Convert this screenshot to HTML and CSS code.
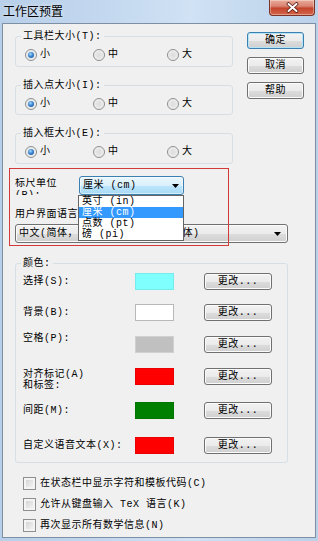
FILE: index.html
```html
<!DOCTYPE html>
<html>
<head>
<meta charset="utf-8">
<link rel="stylesheet" href="styles.css">
</head>
<body>
<div class="window">
  <div class="titlebar">
    <div class="title">工作区预置</div>
    <div class="close">
      <svg width="13" height="11" viewBox="0 0 13 11">
        <path d="M2.5 2 L10.5 9 M10.5 2 L2.5 9" stroke="#5a1c12" stroke-width="3.6" stroke-linecap="round"/>
        <path d="M2.5 2 L10.5 9 M10.5 2 L2.5 9" stroke="#ffffff" stroke-width="2" stroke-linecap="round"/>
      </svg>
    </div>
  </div>
  <div class="client">
    <div class="top">
      <div class="groups">
        <div class="group g1">
          <div class="legend">工具栏大小(T):</div>
          <div class="radios">
            <span class="opt"><i class="radio on"></i>小</span>
            <span class="opt"><i class="radio"></i>中</span>
            <span class="opt"><i class="radio"></i>大</span>
          </div>
        </div>
        <div class="group g2">
          <div class="legend">插入点大小(I):</div>
          <div class="radios">
            <span class="opt"><i class="radio on"></i>小</span>
            <span class="opt"><i class="radio"></i>中</span>
            <span class="opt"><i class="radio"></i>大</span>
          </div>
        </div>
        <div class="group g3">
          <div class="legend">插入框大小(E):</div>
          <div class="radios">
            <span class="opt"><i class="radio on"></i>小</span>
            <span class="opt"><i class="radio"></i>中</span>
            <span class="opt"><i class="radio"></i>大</span>
          </div>
        </div>
      </div>
      <div class="buttons">
        <div class="btn default">确定</div>
        <div class="btn">取消</div>
        <div class="btn">帮助</div>
      </div>
    </div>

    <div class="ruler-row">
      <div class="ruler-label">标尺单位<br>(R):</div>
      <div class="combo-wrap">
        <div class="combo hot"><span>厘米 (cm)</span><svg class="arrow" width="7" height="4" viewBox="0 0 7 4"><polygon points="0,0 7,0 3.5,4" fill="#000"/></svg></div>
        <div class="dropdown">
          <div class="item">英寸 (in)</div>
          <div class="item sel">厘米 (cm)</div>
          <div class="item">点数 (pt)</div>
          <div class="item">磅 (pi)</div>
        </div>
      </div>
    </div>

    <div class="lang-label">用户界面语言(L):</div>
    <div class="combo wide"><span>中文(简体，中国) - 中文 (CN简体)</span><svg class="arrow" width="7" height="4" viewBox="0 0 7 4"><polygon points="0,0 7,0 3.5,4" fill="#000"/></svg></div>

    <div class="group colors">
      <div class="legend">颜色:</div>
      <div class="color-grid">
        <div class="clabel">选择(S):</div><div class="swatch sw-cyan"></div><div class="btn change">更改...</div>
        <div class="clabel">背景(B):</div><div class="swatch sw-white"></div><div class="btn change">更改...</div>
        <div class="clabel up">空格(P):</div><div class="swatch sw-grey"></div><div class="btn change">更改...</div>
        <div class="clabel two">对齐标记(A)<br>和标签:</div><div class="swatch sw-red"></div><div class="btn change">更改...</div>
        <div class="clabel">间距(M):</div><div class="swatch sw-green"></div><div class="btn change">更改...</div>
        <div class="clabel">自定义语音文本(X):</div><div class="swatch sw-red"></div><div class="btn change">更改...</div>
      </div>
    </div>

    <div class="checks">
      <div class="check"><i class="box"></i>在状态栏中显示字符和模板代码(C)</div>
      <div class="check"><i class="box"></i>允许从键盘输入 TeX 语言(K)</div>
      <div class="check"><i class="box"></i>再次显示所有数学信息(N)</div>
    </div>

    <div class="annot"></div>
  </div>
</div>
</body>
</html>
```

FILE: styles.css
```css
* { box-sizing: border-box; }
html, body { margin: 0; padding: 0; }
body {
  width: 318px;
  height: 541px;
  overflow: hidden;
  font-family: "Liberation Mono", "Noto Sans CJK SC", monospace;
  font-size: 10px;
  letter-spacing: 0.5px;
  line-height: 12px;
  color: #000;
}
.window {
  width: 318px;
  height: 541px;
  background: linear-gradient(to right, #b7cfe9 0%, #c6daf0 40%, #d0e2f4 60%, #bad1ea 100%);
  display: flex;
  flex-direction: column;
}
.titlebar {
  height: 23px;
  flex: none;
  display: flex;
  justify-content: space-between;
  align-items: flex-start;
}
.title {
  font-family: "Noto Sans CJK SC", sans-serif;
  font-size: 12px;
  letter-spacing: 0;
  line-height: 14px;
  margin: 4px 0 0 3px;
  text-shadow: 0 0 4px rgba(255,255,255,0.8);
}
.close {
  width: 46px;
  height: 16px;
  margin-right: 3px;
  border: 1px solid #7d3225;
  border-top: none;
  border-radius: 0 0 4px 4px;
  background: linear-gradient(#eaa998 0%, #d98673 40%, #c4442c 55%, #d3654b 100%);
  box-shadow: inset 0 0 0 1px rgba(255,255,255,0.35);
  display: flex;
  align-items: center;
  justify-content: center;
}
.client {
  flex: none;
  height: 515px;
  margin: 0 2px;
  border: 1px solid #7e8ea3;
  background: #f0f0f0;
  padding: 8px 0 0 12px;
  position: relative;
}
.top { display: flex; align-items: flex-start; }
.groups {
  width: 218px;
  padding-top: 4px;
  display: flex;
  flex-direction: column;
  gap: 18px;
}
.group {
  border: 1px solid #d5dfe5;
  border-radius: 3px;
}
.g1 { height: 31px; }
.g2 { height: 30px; }
.g3 { height: 31px; }
.legend {
  width: fit-content;
  margin: -6px 0 0 5px;
  padding: 0 2px;
  background: #f0f0f0;
  white-space: nowrap;
}
.radios {
  display: grid;
  grid-template-columns: 68px 74px auto;
  padding-left: 9px;
  margin-top: 6px;
  height: 12px;
}
.opt { display: flex; align-items: center; gap: 3px; }
.radio {
  width: 12px;
  height: 12px;
  border-radius: 50%;
  border: 1px solid #8c8e90;
  background: radial-gradient(circle at 50% 50%, #dcdcdc 0%, #e6e6e6 45%, #fbfbfb 100%);
  display: flex;
  align-items: center;
  justify-content: center;
}
.radio.on::after {
  content: "";
  width: 6px;
  height: 6px;
  border-radius: 50%;
  background: radial-gradient(circle at 40% 35%, #a9dcff 0%, #3b86d0 45%, #164d8f 100%);
}
.buttons {
  margin-left: 14px;
  display: flex;
  flex-direction: column;
  gap: 8px;
}
.btn {
  width: 57px;
  height: 17px;
  border: 1px solid #707070;
  border-radius: 3px;
  background: linear-gradient(#f2f2f2 0%, #ebebeb 50%, #dddddd 51%, #cfcfcf 100%);
  box-shadow: inset 0 0 0 1px #fbfbfb;
  display: flex;
  align-items: center;
  justify-content: center;
  white-space: nowrap;
}
.btn.default {
  border-color: #3c7fb1;
  box-shadow: inset 0 0 0 1px #b6e4f7;
}
.ruler-row {
  display: flex;
  align-items: flex-start;
  margin-top: 12px;
}
.ruler-label {
  width: 64px;
  height: 17px;
  margin-top: 2px;
  overflow: hidden;
  white-space: nowrap;
}
.combo-wrap { position: relative; }
.combo {
  height: 19px;
  border: 1px solid #707070;
  border-radius: 3px;
  background: linear-gradient(#f2f2f2 0%, #ebebeb 50%, #dddddd 51%, #cfcfcf 100%);
  box-shadow: inset 0 0 0 1px #fbfbfb;
  display: flex;
  align-items: center;
  justify-content: space-between;
  padding: 0 4px 0 3px;
  white-space: nowrap;
  overflow: hidden;
}
.combo.hot {
  width: 105px;
  border-color: #3c7fb1;
  background: linear-gradient(#eaf6fd 0%, #d9f0fc 50%, #bee6fd 51%, #a7d9f5 100%);
  box-shadow: inset 0 0 0 1px rgba(255,255,255,0.5);
}
.arrow { flex: none; display: block; }
.dropdown {
  position: absolute;
  left: -1px;
  top: 19px;
  width: 106px;
  border: 1px solid #646464;
  background: #fff;
  z-index: 2;
}
.item {
  height: 11px;
  line-height: 11px;
  padding-left: 3px;
  white-space: nowrap;
}
.item.sel { background: #3399ff; color: #fff; }
.lang-label {
  margin-top: 14px;
  white-space: nowrap;
}
.combo.wide {
  width: 273px;
  margin-top: 3px;
  padding-right: 6px;
}
.colors {
  width: 273px;
  height: 200px;
  margin-top: 20px;
}
.color-grid {
  display: grid;
  grid-template-columns: 112px 69px 68px;
  grid-template-rows: 31px 32px 32px 34px 35px 17px;
  margin-top: 3px;
  padding-left: 7px;
  align-items: start;
}
.clabel { margin-top: 3px; white-space: nowrap; }
.clabel.up { margin-top: -3px; }
.clabel.two { margin-top: 1px; line-height: 11px; }
.swatch { width: 39px; height: 17px; border: 1px solid rgba(0,0,0,0.08); }
.sw-cyan { background: #80ffff; }
.sw-white { background: #ffffff; border-color: #b8b8b8; }
.sw-grey { background: #c0c0c0; border-color: #d0d0d0; }
.sw-red { background: #ff0000; }
.sw-green { background: #008000; }
.btn.change { width: 68px; height: 17px; }
.checks {
  margin-top: 14px;
  padding-left: 8px;
  display: flex;
  flex-direction: column;
  gap: 8px;
}
.check {
  display: flex;
  align-items: center;
  gap: 4px;
  height: 13px;
  white-space: nowrap;
}
.box {
  width: 13px;
  height: 13px;
  border: 1px solid #8e8f8f;
  background: linear-gradient(135deg, #cbcbcb 0%, #e4e4e4 50%, #f7f7f7 100%);
  box-shadow: inset 0 0 0 2px #f4f4f4;
}
.annot {
  position: absolute;
  left: 6px;
  top: 144px;
  width: 220px;
  height: 78px;
  border: 1px solid #d23a3a;
  z-index: 3;
  pointer-events: none;
}
```
